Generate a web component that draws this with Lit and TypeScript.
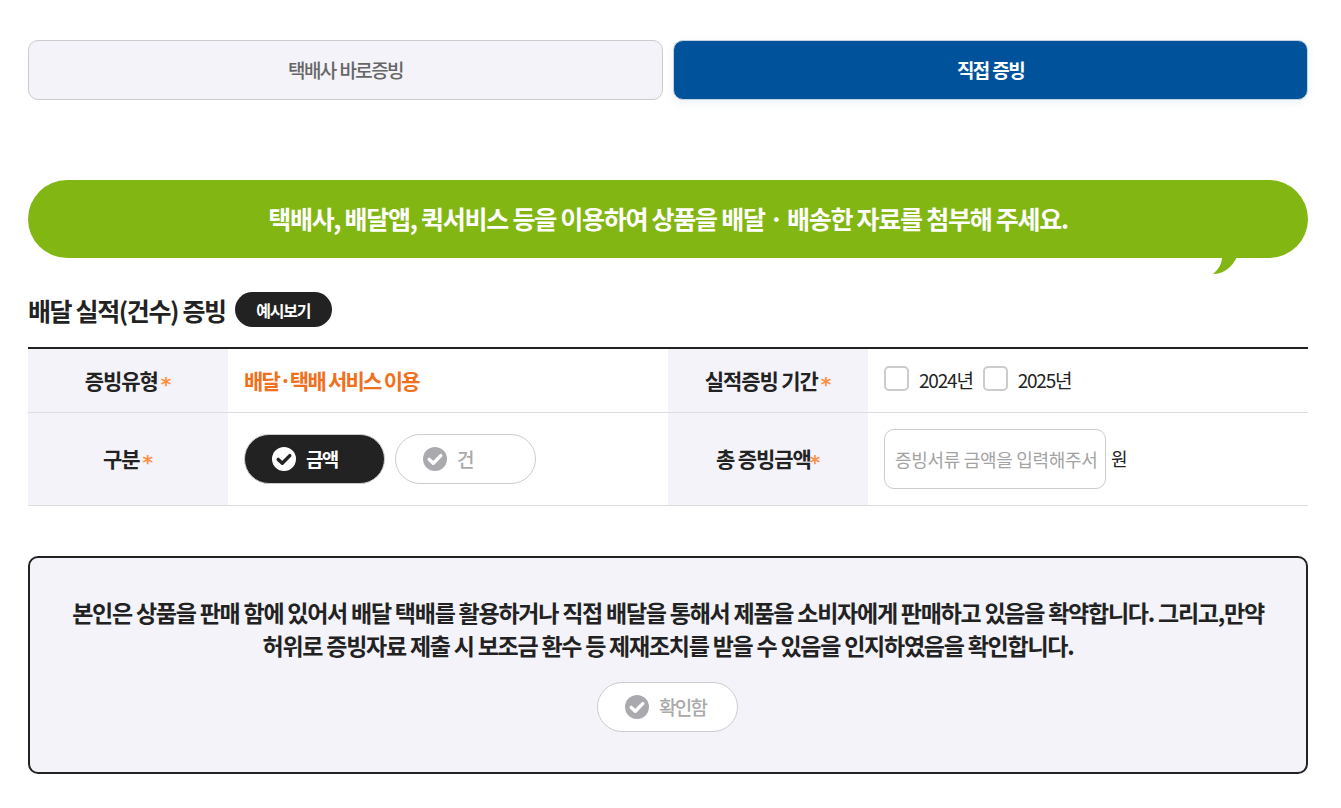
import { LitElement, html, css, svg } from "lit";
import { customElement } from "lit/decorators.js";

const check = (bg: string, fg: string) => html`<svg class="chk" viewBox="0 0 24 24" width="24" height="24" aria-hidden="true">
  <circle cx="12" cy="12" r="12" fill="${bg}"></circle>
  ${svg`<path d="M6.2 12.4 L10.3 16.2 L17.8 8.6" fill="none" stroke="${fg}" stroke-width="3.4" stroke-linecap="round" stroke-linejoin="round"></path>`}
</svg>`;

@customElement("app-root")
export class AppRoot extends LitElement {
  static styles = css`
    :host {
      display: block;
      box-sizing: border-box;
      width: 1341px;
      min-height: 808px;
      padding: 40px 33px 34px 28px;
      background: #fff;
      color: #222;
      font-family: "Noto Sans CJK KR", "Noto Sans", sans-serif;
      font-size: 16px;
    }
    * { box-sizing: border-box; }
    .tabs { display: flex; gap: 10px; }
    .tab {
      flex: 1;
      height: 60px;
      display: flex;
      align-items: center;
      justify-content: center;
      border-radius: 10px;
      font-size: 19px;
      font-weight: 500;
      letter-spacing: -1.6px;
      word-spacing: 1px;
      padding-bottom: 2px;
    }
    .tab.off { background: #f3f3f9; border: 1px solid #ccc; color: #666; }
    .tab.on {
      background: #00539b;
      border: 1px solid #c4d3e4;
      color: #fff;
      font-weight: 700;
      box-shadow: 0 3px 8px rgba(0, 83, 155, 0.08);
    }
    .bubble {
      position: relative;
      margin-top: 80px;
      height: 78px;
      border-radius: 39px;
      background: #82b612;
      color: #fff;
      display: flex;
      align-items: center;
      justify-content: center;
      font-size: 25px;
      font-weight: 700;
      letter-spacing: -1.27px;
      padding-bottom: 2px;
    }
    .tail { position: absolute; left: 1185px; top: 77px; width: 26px; height: 17px; display: block; }
    .head { display: flex; align-items: center; gap: 9px; margin-top: 34px; height: 35px; }
    .head h2 { margin: 0; font-size: 25px; font-weight: 700; letter-spacing: -1.38px; color: #222; }
    .pill-btn {
      width: 97px;
      height: 35px;
      border-radius: 18px;
      background: #222;
      color: #fff;
      display: flex;
      align-items: center;
      justify-content: center;
      font-size: 16px;
      font-weight: 700;
      letter-spacing: -1.2px;
    }
    .grid {
      margin-top: 20px;
      border-top: 2px solid #222;
      display: grid;
      grid-template-columns: 200px 440px 200px 440px;
      grid-template-rows: 64px 93px;
    }
    .th, .td { display: flex; align-items: center; border-bottom: 1px solid #ddd; }
    .th {
      background: #f3f3f9;
      justify-content: center;
      font-size: 21px;
      font-weight: 700;
      letter-spacing: -1.1px;
      color: #222;
      padding-bottom: 2px;
    }
    .td { padding-left: 16px; }
    .star {
      color: #ff8f45;
      margin-left: 3px;
      font-family: "DejaVu Sans", sans-serif;
      font-size: 20px;
      font-weight: 700;
      letter-spacing: 0;
      position: relative;
      top: 4px;
    }
    .star.tight { margin-left: -1px; }
    .orange { color: #f26f1c; font-size: 21px; font-weight: 700; letter-spacing: -1.75px; padding-bottom: 2px; }
    .cb { width: 25px; height: 25px; border: 2px solid #ccc; border-radius: 5px; background: #fff; flex: none; margin-top: -4px; }
    .cb-label { font-size: 19px; letter-spacing: -1.2px; color: #222; margin-left: 10px; margin-right: 10px; padding-bottom: 2px; }
    .radio {
      width: 141px;
      height: 50px;
      border-radius: 25px;
      display: flex;
      align-items: center;
      gap: 10px;
      padding-left: 27px;
      font-size: 19px;
      font-weight: 500;
      letter-spacing: -1.7px;
      margin-right: 10px;
    }
    .radio span { padding-bottom: 2px; }
    .radio.on { background: #222; border: 1px solid #ccc; color: #fff; font-weight: 700; }
    .radio.off { background: #fff; border: 1px solid #ccc; color: #aaa; }
    .chk { display: block; flex: none; }
    .input {
      width: 222px;
      height: 60px;
      border: 1px solid #ccc;
      border-radius: 10px;
      background: #fff;
      display: flex;
      align-items: center;
      padding-left: 10px;
      font-size: 18px;
      letter-spacing: -0.3px;
      color: #a3a3a3;
      white-space: nowrap;
      overflow: hidden;
    }
    .unit { margin-left: 5px; font-size: 18px; color: #222; padding-bottom: 2px; }
    .box {
      margin-top: 50px;
      height: 218px;
      border: 2px solid #222;
      border-radius: 10px;
      background: #f3f3f9;
      display: flex;
      flex-direction: column;
      align-items: center;
      padding-top: 38px;
    }
    .box p {
      margin: 0;
      text-align: center;
      font-size: 23px;
      line-height: 33px;
      font-weight: 700;
      letter-spacing: -1.24px;
      color: #222;
    }
    .confirm { margin: 20px 1px 0 0; }
  `;

  render() {
    return html`
      <div class="tabs">
        <div class="tab off">택배사 바로증빙</div>
        <div class="tab on">직접 증빙</div>
      </div>
      <div class="bubble">
        택배사, 배달앱, 퀵서비스 등을 이용하여 상품을 배달 · 배송한 자료를 첨부해 주세요.
        <svg class="tail" viewBox="0 0 26 17" aria-hidden="true"><path d="M9 0 H24 C19 10 11 17 0 17 C6 12 9 6 9 0 Z" fill="#82b612"></path></svg>
      </div>
      <div class="head">
        <h2>배달 실적(건수) 증빙</h2>
        <div class="pill-btn">예시보기</div>
      </div>
      <div class="grid">
        <div class="th">증빙유형<span class="star">*</span></div>
        <div class="td"><span class="orange">배달·택배 서비스 이용</span></div>
        <div class="th">실적증빙 기간<span class="star">*</span></div>
        <div class="td">
          <span class="cb"></span><span class="cb-label">2024년</span>
          <span class="cb"></span><span class="cb-label">2025년</span>
        </div>
        <div class="th">구분<span class="star">*</span></div>
        <div class="td">
          <div class="radio on">${check("#fff", "#222")}<span>금액</span></div>
          <div class="radio off">${check("#aaaaae", "#fff")}<span>건</span></div>
        </div>
        <div class="th">총 증빙금액<span class="star tight">*</span></div>
        <div class="td">
          <div class="input">증빙서류 금액을 입력해주서</div><span class="unit">원</span>
        </div>
      </div>
      <div class="box">
        <p>본인은 상품을 판매 함에 있어서 배달 택배를 활용하거나 직접 배달을 통해서 제품을 소비자에게 판매하고 있음을 확약합니다. 그리고,만약<br />허위로 증빙자료 제출 시 보조금 환수 등 제재조치를 받을 수 있음을 인지하였음을 확인합니다.</p>
        <div class="radio off confirm">${check("#aaaaae", "#fff")}<span>확인함</span></div>
      </div>
    `;
  }
}
